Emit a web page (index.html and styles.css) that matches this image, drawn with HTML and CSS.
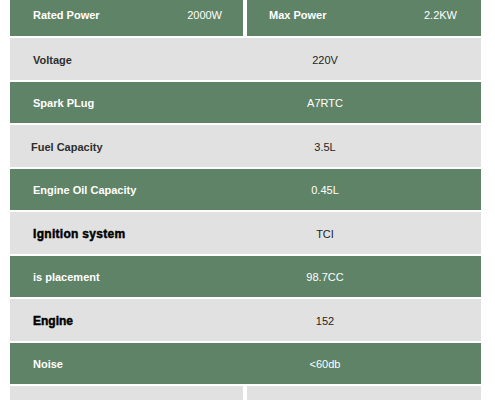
FILE: index.html
```html
<!DOCTYPE html>
<html>
<head>
<meta charset="utf-8">
<link rel="stylesheet" href="styles.css">
</head>
<body>
<div class="specs">
  <div class="head-row">
    <div class="head-cell"><span class="lbl">Rated Power</span><span class="val">2000W</span></div>
    <div class="head-cell right"><span class="lbl">Max Power</span><span class="val">2.2KW</span></div>
  </div>
  <div class="row gray"><span class="lbl">Voltage</span><span class="val">220V</span></div>
  <div class="row green"><span class="lbl">Spark PLug</span><span class="val">A7RTC</span></div>
  <div class="row gray"><span class="lbl shift">Fuel Capacity</span><span class="val">3.5L</span></div>
  <div class="row green"><span class="lbl">Engine Oil Capacity</span><span class="val">0.45L</span></div>
  <div class="row gray"><span class="lbl strong wide">Ignition system</span><span class="val">TCI</span></div>
  <div class="row green"><span class="lbl">is placement</span><span class="val">98.7CC</span></div>
  <div class="row gray"><span class="lbl strong">Engine</span><span class="val">152</span></div>
  <div class="row green"><span class="lbl">Noise</span><span class="val">&lt;60db</span></div>
  <div class="foot-row">
    <div class="foot-cell"></div>
    <div class="foot-cell"></div>
  </div>
</div>
</body>
</html>
```
FILE: styles.css
```css
html, body {
  margin: 0;
  padding: 0;
  background: #ffffff;
  overflow: hidden;
}
body {
  font-family: "Liberation Sans", Arial, sans-serif;
  font-size: 11px;
}
.specs {
  width: 471px;
  margin: -5.5px 0 0 10px;
  display: flex;
  flex-direction: column;
  gap: 2px;
}
.head-row, .foot-row {
  display: grid;
  grid-template-columns: 233px 234px;
  column-gap: 4px;
}
.head-cell {
  background: #5f8366;
  color: #ffffff;
  height: 41.5px;
  display: flex;
  align-items: center;
  justify-content: space-between;
  padding: 0 21px 0 23px;
  box-sizing: border-box;
}
.head-cell.right {
  padding: 0 24px 0 22px;
  border-top-right-radius: 6px;
}
.head-cell .val {
  font-weight: normal;
}
.row {
  height: 41.5px;
  display: grid;
  grid-template-columns: 159px 312px;
  align-items: center;
}
.row .lbl {
  padding-left: 23px;
  padding-top: 2px;
}
.row .val {
  text-align: center;
  padding-top: 2px;
}
.lbl {
  font-weight: bold;
  white-space: nowrap;
}
.lbl.shift {
  padding-left: 21px;
}
.lbl.strong {
  font-size: 12px;
  color: #000000;
  -webkit-text-stroke: 0.45px #000000;
}
.lbl.wide {
  letter-spacing: 0.3px;
}
.gray {
  background: #e1e1e1;
  color: #2e2e2e;
}
.gray .val {
  color: #1e1e1e;
}
.green {
  background: #5f8366;
  color: #ffffff;
}
.foot-cell {
  background: #e1e1e1;
  height: 41.5px;
}
```
